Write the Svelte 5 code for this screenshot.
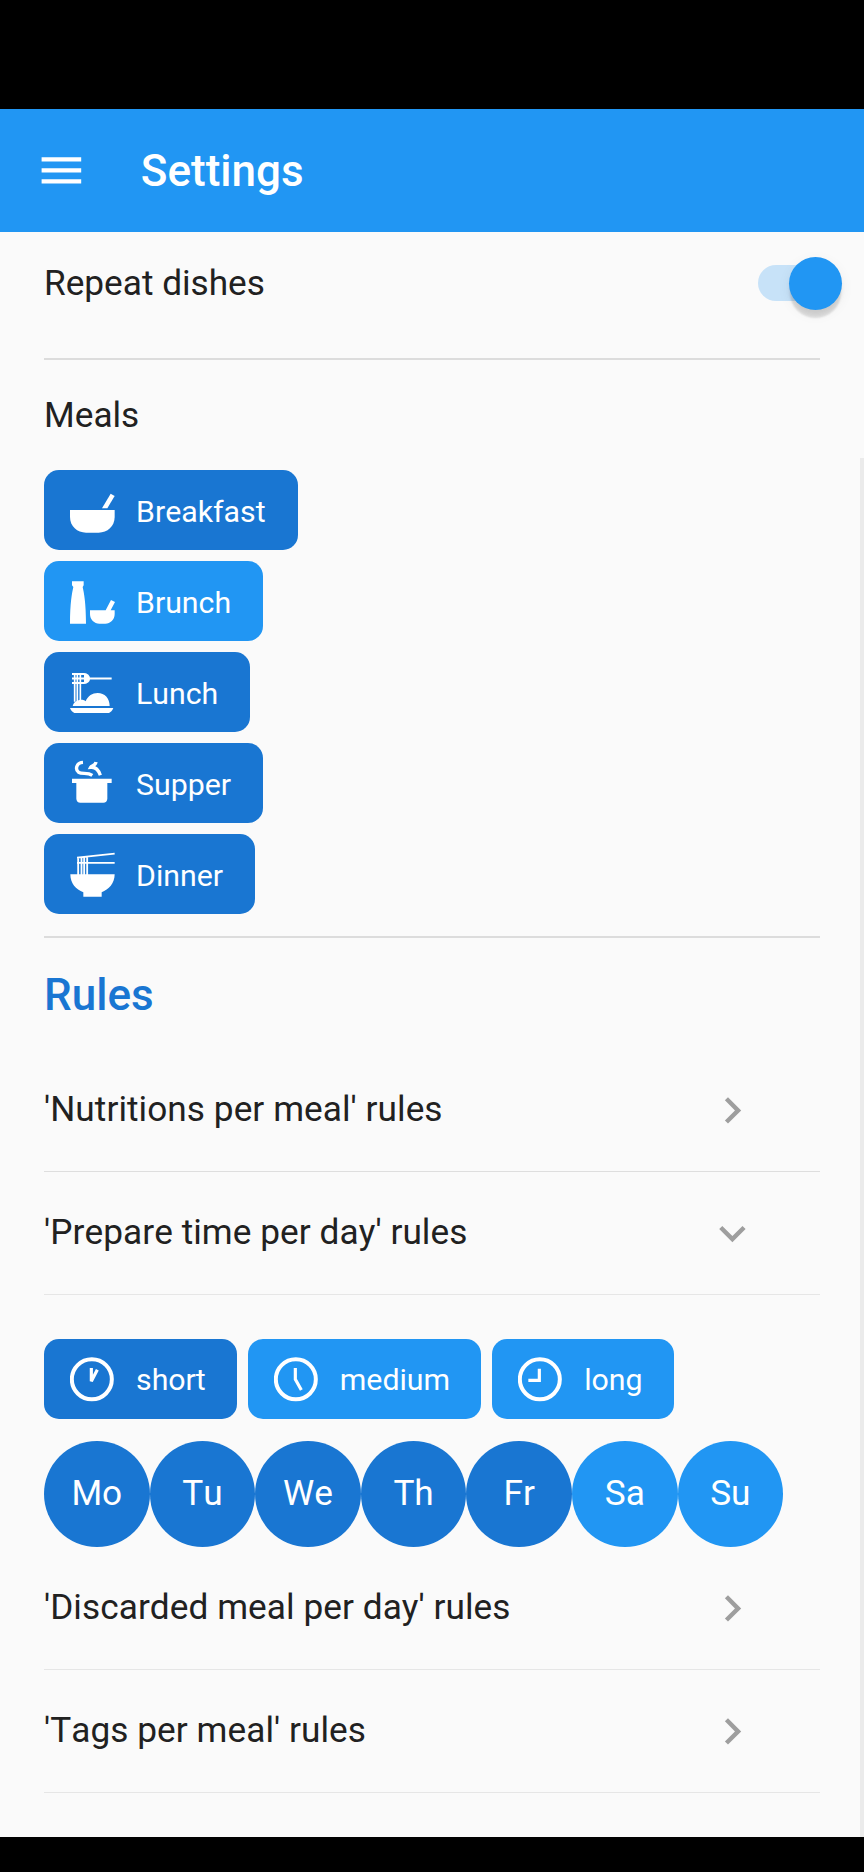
<script>
  const meals = [
    { name: 'Breakfast', icon: 'bowl', on: true },
    { name: 'Brunch', icon: 'brunch', on: false },
    { name: 'Lunch', icon: 'pasta', on: true },
    { name: 'Supper', icon: 'pot', on: true },
    { name: 'Dinner', icon: 'noodles', on: true },
  ];
  const times = [
    { name: 'short', icon: 'M64 36V76L82 41', on: true },
    { name: 'medium', icon: 'M64 36V70L82 102', on: false },
    { name: 'long', icon: 'M64 38V73H31', on: false },
  ];
  const days = ['Mo', 'Tu', 'We', 'Th', 'Fr', 'Sa', 'Su'];
</script>

{#snippet rule(label, open)}
  <div class="rule" class:soft={!label.startsWith("'N")}>
    <span>{label}</span>
    <svg class="chev" viewBox="0 0 24 24">
      {#if open}
        <path d="M16.59 8.59L12 13.17 7.41 8.59 6 10l6 6 6-6z" />
      {:else}
        <path d="M10 6L8.59 7.41 13.17 12l-4.58 4.59L10 18l6-6z" />
      {/if}
    </svg>
  </div>
{/snippet}

<div class="screen">
  <div class="status"></div>
  <header>
    <svg class="menu" viewBox="0 0 24 24"><path d="M3 18h18v-2H3v2zm0-5h18v-2H3v2zm0-7v2h18V6H3z" /></svg>
    <h1>Settings</h1>
  </header>

  <main>
    <div class="repeat">
      <span>Repeat dishes</span>
      <div class="switch"><div class="thumb"></div></div>
    </div>

    <section class="meals">
      <div class="label">Meals</div>
      <div class="stack">
        {#each meals as m}
          <div class="chip" class:on={m.on}>
            <svg viewBox="0 0 138 138">
              {#if m.icon === 'bowl'}
                <path d="M0 69H134V90C134 118 112 137 86 137H48C22 137 0 118 0 90Z" />
                <path d="M96 64L122 20L134 27L112 64Z" />
              {:else if m.icon === 'brunch'}
                <path d="M6 10H41V22L38 27C42 45 48 75 48 137H0C0 75 6 45 10 27L6 22Z" />
                <path d="M60 97H107L123 66L135 72L122 97H134V108C134 125 121 137 106 137H88C73 137 60 125 60 108Z" />
              {:else if m.icon === 'pasta'}
                <path class="line" stroke-width="6" d="M6 15H42C62 15 62 42 42 42H6M6 28.500H125" />
                <path d="M42 14H48L58 24V34L48 43H42Z" />
                <path class="line" stroke-width="5" d="M14 12V98M22 12V98M31 12V98" />
                <path d="M8 111C12 98 20 94 32 92C40 92 46 94 47 97C54 80 67 72 83 72C104 72 119 88 119 111Z" />
                <path d="M0 117H130C128 124 123 129 117 132H13C7 129 2 124 0 117Z" />
              {:else if m.icon === 'pot'}
                <path d="M6 56H125V69H112V116C112 123 107 128 100 128H31C24 128 19 123 19 116V69H6Z" />
                <path class="line" stroke-width="10" d="M39 7C18 8 15 29 26 37C36 44 52 36 67 46" />
                <path class="line" stroke-width="10" d="M78 6C76 18 65 16 62 22C78 20 87 34 91 46" />
              {:else}
                <path d="M1 70H134C134 98 116 116 95 124V137H40V124C18 116 1 98 1 70Z" />
                <path class="line" stroke-width="5.500" d="M21 20L134 8M21 35.500H134M24.500 18V72M34.500 18V72M42.500 18V72M51.500 16V72" />
              {/if}
            </svg>
            <span>{m.name}</span>
          </div>
        {/each}
      </div>
    </section>

    <h2>Rules</h2>
    {@render rule("'Nutritions per meal' rules", false)}
    {@render rule("'Prepare time per day' rules", true)}

    <div class="times">
      {#each times as t}
        <div class="chip" class:on={t.on}>
          <svg viewBox="0 0 138 138">
            <circle class="line" cx="65.500" cy="70" r="60" stroke-width="12" />
            <path class="line" stroke-width="9.500" d={t.icon} />
          </svg>
          <span>{t.name}</span>
        </div>
      {/each}
    </div>
    <div class="days">
      {#each days as d, i}
        <div class="day" class:on={i < 5}>{d}</div>
      {/each}
    </div>

    {@render rule("'Discarded meal per day' rules", false)}
    {@render rule("'Tags per meal' rules", false)}
    <div class="scrollbar"></div>
  </main>
  <div class="nav"></div>
</div>

<style>
  :global(body) { margin: 0; background: #000; }
  .screen {
    width: 864px; height: 1872px; display: flex; flex-direction: column; overflow: hidden;
    font-family: Roboto, sans-serif; font-size: 35.2px; font-kerning: none; color: #212121; background: #000;
  }
  .screen * { box-sizing: border-box; }
  svg { flex: none; display: block; fill: #fff; }
  .line { fill: none; stroke: #fff; }
  .status { height: 109px; flex: none; }
  header {
    height: 123px; flex: none; background: #2196f3; color: #fff;
    display: flex; align-items: center; padding-left: 35px;
  }
  .menu { width: 52.8px; height: 52.8px; }
  h1 { margin: 0 0 0 53px; font-size: 44px; font-weight: 500; line-height: 52px; padding-top: 1px; }
  main { position: relative; height: 1605px; flex: none; background: #fafafa; padding: 0 44px; }
  .repeat {
    height: 128px; border-bottom: 2px solid #dcdcdc; display: flex; justify-content: space-between;
    align-items: flex-start; padding-top: 33px; line-height: 36px;
  }
  .switch {
    width: 84px; height: 36px; margin-right: -22px; border-radius: 18px;
    background: linear-gradient(#c7e2f8, #c7e2f8) left / 60px 36px no-repeat;
  }
  .thumb {
    width: 53px; height: 53px; margin: -8px 0 0 31px; border-radius: 50%; background: #2196f3;
    box-shadow: 0 9px 2px -1px rgba(0,0,0,.11), 0 5px 4px rgba(0,0,0,.05), 0 4px 14px rgba(0,0,0,.06);
  }
  .meals { height: 578px; border-bottom: 2px solid #dcdcdc; }
  .label { height: 110px; line-height: 110px; }
  .stack { display: flex; flex-direction: column; align-items: flex-start; gap: 11px; }
  .chip {
    height: 80px; display: flex; align-items: center; gap: 20px; padding: 0 32px 0 26px;
    border-radius: 15px; background: #2196f3; color: #fff; font-size: 30.3px;
    line-height: 36px;
  }
  .chip svg { width: 46px; height: 46px; }
  .chip span { padding-top: 3px; }
  .on { background: #1976d2; }
  h2 { margin: 0; height: 111px; line-height: 114px; font-size: 44px; font-weight: 500; color: #1976d2; }
  .rule {
    height: 123px; border-bottom: 1px solid #dedede; display: flex; justify-content: space-between;
    align-items: center; padding-right: 61.500px;
  }
  .rule span { margin-top: -2px; letter-spacing: .06px; }
  .soft { border-color: #e6e6e6; }
  .chev { width: 52.8px; height: 52.8px; fill: #9e9e9e; }
  .times { display: flex; gap: 11px; padding-top: 44px; }
  .times .chip { padding-right: 31px; }
  .times .chip span { padding-top: 1px; }
  .days { display: flex; padding-top: 22px; }
  .day {
    width: 105.6px; height: 106px; border-radius: 50%; background: #2196f3; color: #fff;
    display: flex; align-items: center; justify-content: center; padding-bottom: 2px;
  }
  .day.on { background: #1976d2; }
  .scrollbar { position: absolute; right: 0; top: 226px; bottom: 0; width: 4px; background: #ebebeb; }
</style>
